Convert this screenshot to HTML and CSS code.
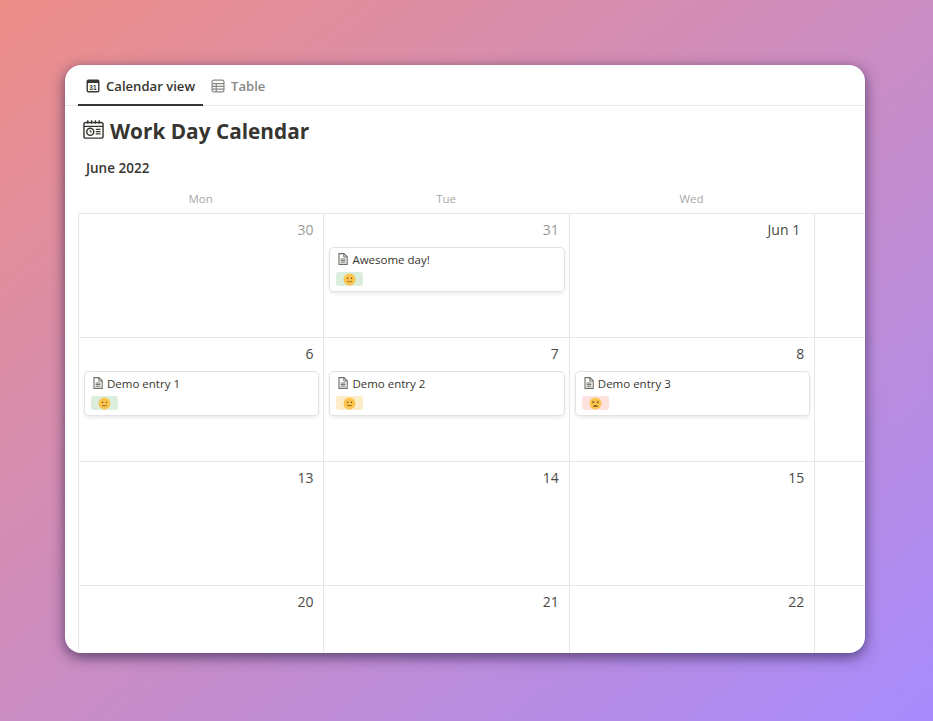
FILE: index.html
```html
<!DOCTYPE html>
<html lang="en">
  <head>
    <meta charset="UTF-8" />
    <meta name="viewport" content="width=device-width, initial-scale=1.0" />
    <title>Work Day Calendar</title>
    <link rel="stylesheet" href="styles.css">
  </head>
  <body>
    <svg class="defs" width="0" height="0" aria-hidden="true">
      <symbol id="page" viewBox="0 0 10 12">
        <path d="M1 .6h5l3.2 3.2v7.6H1z" fill="#fff" stroke="#6f6c67" stroke-width="1.1"/>
        <path d="M5.8.8v3.2h3.2" fill="none" stroke="#6f6c67" stroke-width="1"/>
        <path d="M2.6 6h4.8M2.6 7.6h4.8M2.6 9.2h4.8" stroke="#6f6c67" stroke-width="1"/>
      </symbol>
      <symbol id="smile" viewBox="0 0 14 14">
        <circle cx="7" cy="7" r="6.4" fill="#fcc44d"/>
        <circle cx="4.9" cy="5.6" r=".8" fill="#6b4a1c"/>
        <circle cx="9.1" cy="5.6" r=".8" fill="#6b4a1c"/>
        <path d="M4.4 8.8q2.6 1.7 5.2 0" fill="none" stroke="#6b4a1c" stroke-width=".8"/>
      </symbol>
      <symbol id="neutral" viewBox="0 0 14 14">
        <circle cx="7" cy="7" r="6.4" fill="#fcc44d"/>
        <circle cx="4.9" cy="5.6" r=".8" fill="#6b4a1c"/>
        <circle cx="9.1" cy="5.6" r=".8" fill="#6b4a1c"/>
        <path d="M4.6 9.2h4.8" fill="none" stroke="#6b4a1c" stroke-width=".8"/>
      </symbol>
      <symbol id="tired" viewBox="0 0 14 14">
        <circle cx="7" cy="7" r="6.4" fill="#fcc44d"/>
        <path d="M3.4 4.6l2.2 1-2.2 1M10.6 4.6l-2.2 1 2.2 1" fill="none" stroke="#6b4a1c" stroke-width=".8"/>
        <path d="M4 10.6q3-4 6 0z" fill="#6b4a1c"/>
      </symbol>
    </svg>

    <div class="window">
      <div class="tabs">
        <div class="tab active">
          <svg class="tab-icon" viewBox="0 0 16 16">
            <rect x=".6" y=".6" width="14.8" height="14.8" rx="2.2" fill="#37352f"/>
            <rect x="2.2" y="4.6" width="11.6" height="9.2" rx=".6" fill="#fff"/>
            <text x="8" y="12.6" text-anchor="middle" class="cal-num">31</text>
          </svg>
          Calendar view
        </div>
        <div class="tab">
          <svg class="tab-icon" viewBox="0 0 16 16" fill="none" stroke="#8b8985" stroke-width="1.4">
            <rect x="1.2" y="1.2" width="13.6" height="13.6" rx="2"/>
            <path d="M1.2 5.4h13.6M1.2 8.4h13.6M1.2 11.6h13.6M6 5.4v9.4"/>
          </svg>
          Table
        </div>
      </div>

      <div class="title-row">
        <svg class="title-icon" viewBox="0 0 22 22" fill="none" stroke="#37352f">
          <rect x="1" y="3.6" width="20" height="16.4" rx="2" stroke-width="1.5"/>
          <path d="M1 7.6h20" stroke-width="1.3"/>
          <path d="M5 1.4v3.6M9 1.4v3.6M13 1.4v3.6M17 1.4v3.6" stroke-width="1.4"/>
          <circle cx="7.6" cy="13.4" r="3.7" stroke-width="1.5"/>
          <path d="M7.6 11.4v2.2h2" stroke-width="1"/>
          <path d="M13.4 10.8h5M13.4 13.2h5M13.4 15.6h5" stroke-width="1.3"/>
        </svg>
        <h1>Work Day Calendar</h1>
      </div>

      <div class="month">June 2022</div>

      <div class="weekdays">
        <div>Mon</div>
        <div>Tue</div>
        <div>Wed</div>
        <div></div>
      </div>

      <div class="grid">
        <div class="cell"><div class="day muted">30</div></div>
        <div class="cell">
          <div class="day muted">31</div>
          <div class="entry">
            <div class="entry-name"><svg class="page"><use href="#page"/></svg>Awesome day!</div>
            <span class="tag green"><svg class="face"><use href="#smile"/></svg></span>
          </div>
        </div>
        <div class="cell"><div class="day first">Jun 1</div></div>
        <div class="cell"></div>

        <div class="cell"><div class="day">6</div>
          <div class="entry">
            <div class="entry-name"><svg class="page"><use href="#page"/></svg>Demo entry 1</div>
            <span class="tag green"><svg class="face"><use href="#smile"/></svg></span>
          </div>
        </div>
        <div class="cell"><div class="day">7</div>
          <div class="entry">
            <div class="entry-name"><svg class="page"><use href="#page"/></svg>Demo entry 2</div>
            <span class="tag yellow"><svg class="face"><use href="#neutral"/></svg></span>
          </div>
        </div>
        <div class="cell"><div class="day">8</div>
          <div class="entry">
            <div class="entry-name"><svg class="page"><use href="#page"/></svg>Demo entry 3</div>
            <span class="tag red"><svg class="face"><use href="#tired"/></svg></span>
          </div>
        </div>
        <div class="cell"></div>

        <div class="cell"><div class="day">13</div></div>
        <div class="cell"><div class="day">14</div></div>
        <div class="cell"><div class="day">15</div></div>
        <div class="cell"></div>

        <div class="cell"><div class="day">20</div></div>
        <div class="cell"><div class="day">21</div></div>
        <div class="cell"><div class="day">22</div></div>
        <div class="cell"></div>
      </div>
    </div>
  </body>
</html>
```

FILE: styles.css
```css
html,
body {
  height: 100%;
}

body {
  margin: 0;
  padding: 65px 68px 0 65px;
  box-sizing: border-box;
  overflow: hidden;
  font-family: "Open Sans", "Noto Sans", sans-serif;
  color: #37352f;
  background: linear-gradient(to bottom right, #ee8e88, #a78bfd);
}

.defs {
  position: absolute;
}

.window {
  width: 800px;
  height: 588px;
  padding-left: 13px;
  box-sizing: border-box;
  overflow: hidden;
  background: white;
  border-radius: 16px;
  box-shadow: 0 4px 14px rgba(40, 30, 70, 0.7);
}

.tabs {
  display: flex;
  height: 41px;
  margin-left: -13px;
  padding-left: 13px;
  box-sizing: border-box;
  border-bottom: 1px solid #e9e9e7;
}

.tab {
  display: flex;
  align-items: center;
  gap: 6px;
  height: 41px;
  padding: 2px 8px 0;
  box-sizing: border-box;
  font-size: 13.1px;
  font-weight: 600;
  color: #8b8985;
  border-bottom: 2px solid transparent;
}

.tab.active {
  color: #37352f;
  border-bottom-color: #37352f;
}

.tab-icon {
  width: 14px;
  height: 14px;
}

.cal-num {
  font-family: "Liberation Sans", sans-serif;
  font-size: 7.5px;
  font-weight: 700;
  fill: #37352f;
}

.title-row {
  display: flex;
  align-items: center;
  gap: 6px;
  height: 50px;
  padding-left: 5px;
}

.title-icon {
  width: 21px;
  height: 21px;
  margin-top: -3px;
}

h1 {
  margin: 0;
  font-size: 20.8px;
  font-weight: 700;
  color: #37352f;
}

.month {
  height: 24px;
  padding-left: 8px;
  font-size: 13.5px;
  font-weight: 600;
  line-height: 24px;
}

.weekdays {
  display: grid;
  grid-template-columns: repeat(4, 245.4px);
  height: 33px;
  padding-top: 4px;
  box-sizing: border-box;
  align-items: center;
  text-align: center;
  font-size: 11.5px;
  color: #a8a8a6;
}

.grid {
  display: grid;
  grid-template-columns: repeat(4, 245.4px);
  grid-auto-rows: 124px;
  border-top: 1px solid #e6e6e4;
  border-left: 1px solid #e6e6e4;
}

.cell {
  box-sizing: border-box;
  padding: 0 5px 0 6px;
  border-right: 1px solid #e6e6e4;
  border-bottom: 1px solid #e6e6e4;
}

.day {
  height: 32px;
  padding-right: 5px;
  line-height: 32px;
  text-align: right;
  font-size: 14px;
  color: #4a4946;
}

.day.muted {
  color: #9b9a97;
}

.day.first {
  padding-right: 9px;
}

.entry {
  height: 43px;
  margin-top: 2px;
  padding: 2px 6px;
  box-sizing: border-box;
  background: white;
  border-radius: 4px;
  box-shadow: 0 0 0 1px #e3e3e1, 0 2px 4px rgba(15, 15, 15, 0.12);
}

.entry-name {
  display: flex;
  align-items: center;
  gap: 4px;
  height: 18px;
  font-size: 11.5px;
  font-weight: 500;
}

.page {
  width: 10px;
  height: 12px;
  margin-left: 2px;
}

.tag {
  display: flex;
  align-items: center;
  justify-content: center;
  width: 27px;
  height: 14px;
  margin-top: 4px;
  border-radius: 3px;
}

.face {
  width: 13px;
  height: 13px;
}

.green {
  background: #dbeddb;
}

.yellow {
  background: #fdecc8;
}

.red {
  background: #ffe2dd;
}
```
